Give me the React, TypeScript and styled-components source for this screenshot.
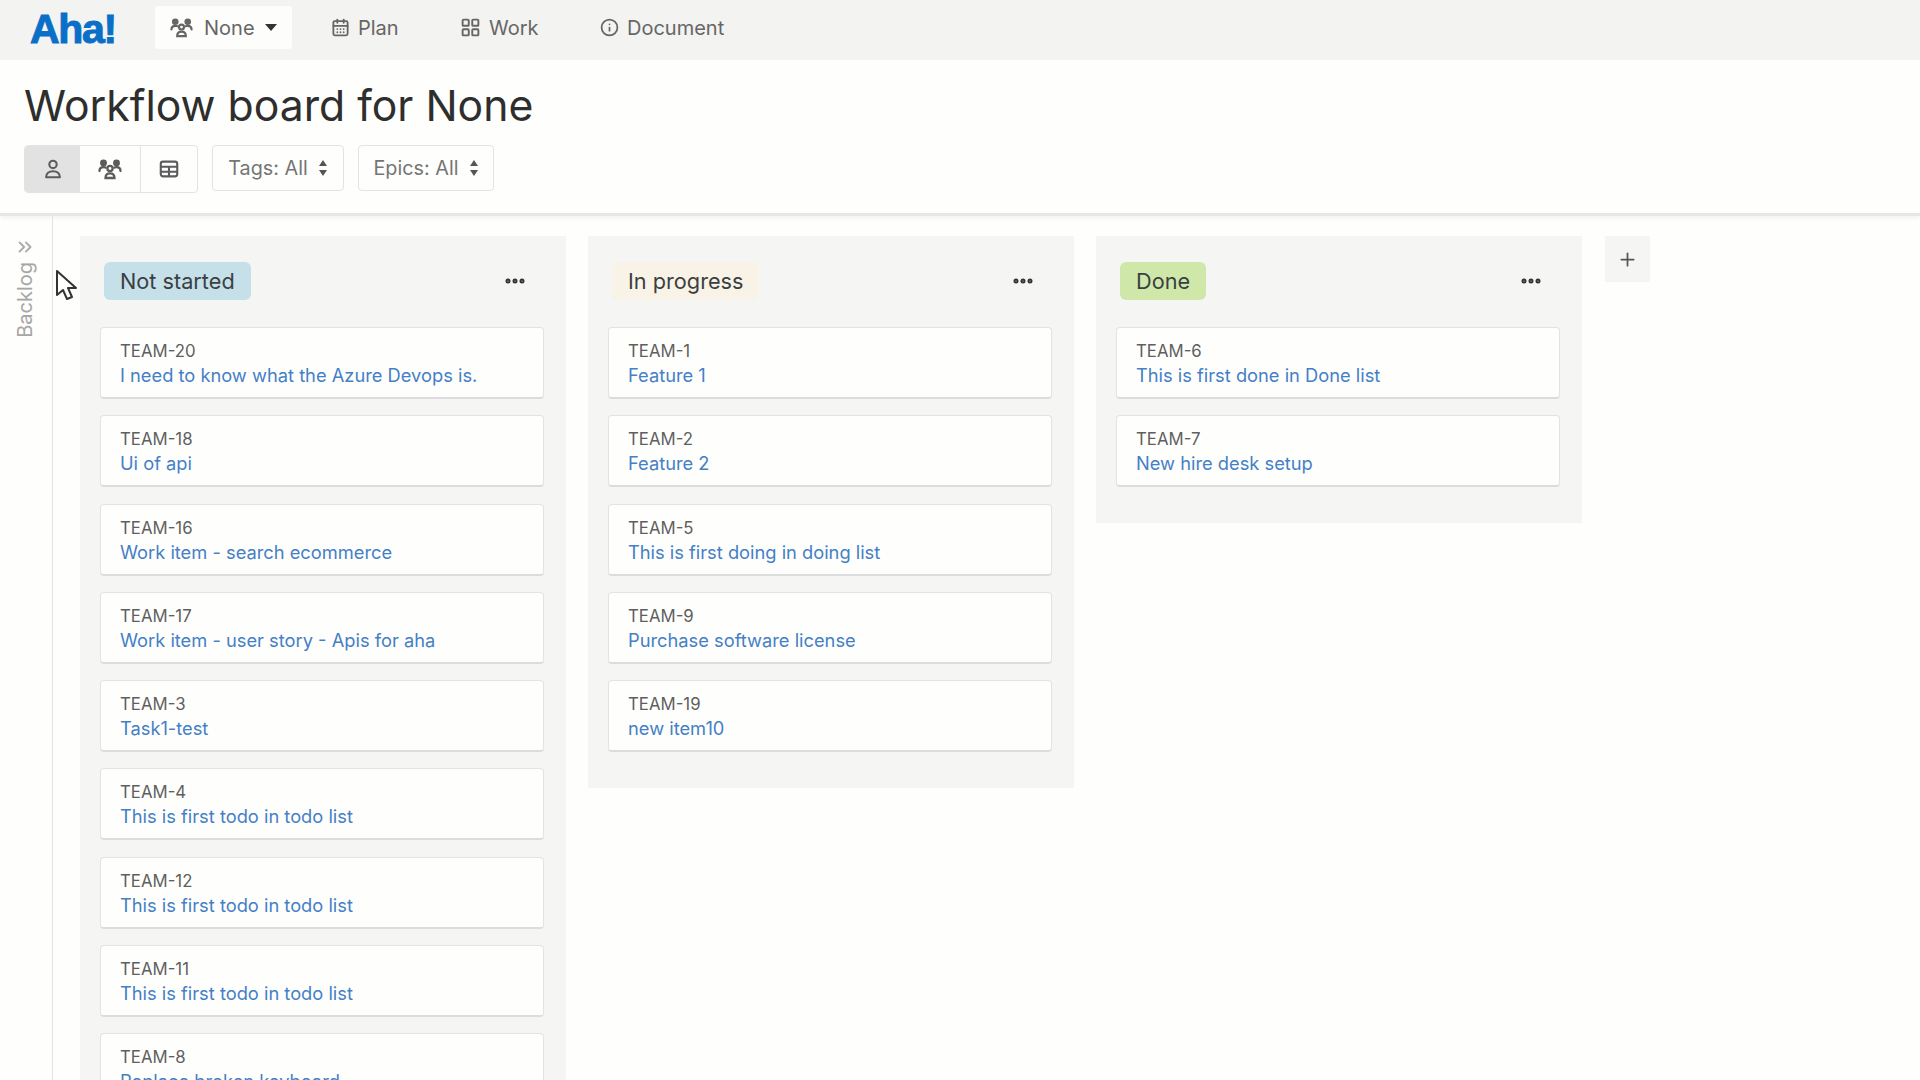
import React from "react";
import styled, { createGlobalStyle } from "styled-components";
import { CalendarDays, ChevronsRight, Ellipsis, Info, LayoutGrid, Plus } from "lucide-react";

const Global = createGlobalStyle`
  html, body { margin: 0; padding: 0; height: 100%; overflow: hidden; background: #fefefc; }
  body { font-family: Inter, "Liberation Sans", sans-serif; }
`;

const Page = styled.div`
  position: relative;
  width: 1920px;
  height: 1080px;
  overflow: hidden;
  background: #fefefc;
  display: flex;
  flex-direction: column;
`;

const Nav = styled.nav`
  height: 60px;
  flex: none;
  box-sizing: border-box;
  padding: 0 0 5px 30px;
  background: #f3f3f1;
  display: flex;
  align-items: center;
`;

const Logo = styled.div`
  width: 125px;
  margin-top: 4px;
  font-family: "Liberation Sans", sans-serif;
  font-weight: 700;
  font-size: 41px;
  letter-spacing: -1.3px;
  color: #0a6fc7;
  -webkit-text-stroke: 1px #0a6fc7;
`;

const TeamButton = styled.div`
  height: 43px;
  width: 137px;
  box-sizing: border-box;
  background: #fdfdfb;
  display: flex;
  align-items: center;
  padding-left: 15px;
  gap: 11px;
  font-size: 20px;
  color: #666;
  border-radius: 3px;
`;

const Caret = styled.span`
  width: 0;
  height: 0;
  border-left: 6px solid transparent;
  border-right: 6px solid transparent;
  border-top: 7px solid #333;
  margin-left: -1px;
`;

const NavItems = styled.div`
  display: flex;
  margin-left: 39px;
`;

const NavItem = styled.div<{ $w: number }>`
  width: ${(p) => p.$w}px;
  display: flex;
  align-items: center;
  gap: 8px;
  font-size: 20px;
  color: #666;
`;

const Header = styled.header`
  height: 156px;
  flex: none;
  box-sizing: border-box;
  padding: 20px 24px 0;
  border-bottom: 3px solid #e6e6e6;
  box-shadow: 0 2px 4px rgba(0, 0, 0, 0.05);
`;

const Title = styled.h1`
  margin: 0;
  font-size: 42.7px;
  line-height: 52px;
  font-weight: 400;
  color: #2e2e2e;
`;

const Toolbar = styled.div`
  display: flex;
  gap: 14px;
  margin-top: 13px;
`;

const ViewGroup = styled.div`
  display: flex;
  height: 46px;
  border: 1px solid #e3e3e3;
  border-radius: 4px;
  overflow: hidden;
  background: #fefefc;
`;

const ViewButton = styled.div<{ $active?: boolean; $divided?: boolean; $w: number }>`
  width: ${(p) => p.$w}px;
  display: flex;
  align-items: center;
  justify-content: center;
  color: #5c5c5c;
  background: ${(p) => (p.$active ? "#e2e2e2" : "transparent")};
  border-left: ${(p) => (p.$divided ? "1px solid #e3e3e3" : "none")};
`;

const Select = styled.div<{ $w: number }>`
  width: ${(p) => p.$w}px;
  height: 46px;
  box-sizing: border-box;
  border: 1px solid #e3e3e3;
  border-radius: 4px;
  display: flex;
  align-items: center;
  justify-content: center;
  gap: 10px;
  font-size: 19.8px;
  color: #757575;
`;

const Body = styled.main`
  flex: 1;
  display: flex;
  min-height: 0;
`;

const Sidebar = styled.aside`
  width: 53px;
  flex: none;
  box-sizing: border-box;
  border-right: 1px solid #e2e2e2;
  display: flex;
  flex-direction: column;
  align-items: center;
  padding: 20px 3px 0 0;
  color: #a9a9a9;
  gap: 4px;
`;

const BacklogLabel = styled.span`
  writing-mode: vertical-rl;
  transform: rotate(180deg);
  font-size: 20px;
  color: #a6a6a6;
`;

const Board = styled.div`
  display: flex;
  align-items: flex-start;
  gap: 22px;
  padding: 20px 0 0 27px;
`;

const Column = styled.section`
  width: 486px;
  flex: none;
  box-sizing: border-box;
  background: #f5f5f3;
  padding: 26px 22px 36px 20px;
  display: flex;
  flex-direction: column;
`;

const ColumnHead = styled.div`
  display: flex;
  align-items: center;
  justify-content: space-between;
  height: 38px;
  margin-bottom: 27px;
  padding: 0 17px 0 4px;
  color: #333;
`;

const Badge = styled.span<{ $bg: string }>`
  height: 38px;
  box-sizing: border-box;
  display: flex;
  align-items: center;
  padding: 0 16px;
  border-radius: 6px;
  background: ${(p) => p.$bg};
  font-size: 21.7px;
  color: #3a3f42;
`;

const Card = styled.article`
  height: 72px;
  flex: none;
  box-sizing: border-box;
  margin-bottom: 16.3px;
  padding: 12px 19px 0;
  background: #fefefd;
  border: 1px solid #e3e3e3;
  border-bottom: 2px solid #dcdcdc;
  border-radius: 4px;
  &:last-child { margin-bottom: 0; }
`;

const CardKey = styled.div`
  font-size: 16.8px;
  line-height: 23px;
  color: #5f5f5f;
`;

const CardName = styled.div`
  font-size: 18.3px;
  line-height: 24px;
  color: #4480c6;
  white-space: nowrap;
`;

const AddColumn = styled.div`
  width: 45px;
  height: 46px;
  flex: none;
  margin-left: 1px;
  background: #f5f5f3;
  display: flex;
  align-items: center;
  justify-content: center;
  color: #555;
`;

const Cursor = styled.svg`
  position: absolute;
  left: 55px;
  top: 269px;
`;

const TeamIcon = ({ size = 23 }: { size?: number }) => (
  <svg width={size} height={size} viewBox="0 0 24 24" fill="none" stroke="currentColor" strokeWidth="2.300" strokeLinecap="round">
    <circle cx="12" cy="11.5" r="2.6" />
    <path d="M7.500 21c0-3 2-4.600 4.500-4.600s4.500 1.600 4.500 4.600z" />
    <circle cx="5.500" cy="6" r="2.300" fill="currentColor" />
    <circle cx="18.500" cy="6" r="2.300" fill="currentColor" />
    <path d="M1.500 14c0-2.600 1.500-3.800 4-3.800 .8 0 1.500 .1 2 .4" />
    <path d="M22.500 14c0-2.600-1.500-3.800-4-3.800-.8 0-1.500 .1-2 .4" />
  </svg>
);

const UserIcon = () => (
  <svg width="22" height="22" viewBox="0 0 24 24" fill="none" stroke="currentColor" strokeWidth="2.300">
    <circle cx="12" cy="7" r="4" />
    <path d="M4.500 21c0-4 3-6.500 7.500-6.500s7.500 2.500 7.500 6.500z" strokeLinejoin="round" />
  </svg>
);

const TableIcon = () => (
  <svg width="22" height="22" viewBox="0 0 24 24" fill="none" stroke="currentColor" strokeWidth="2.300">
    <rect x="3" y="4" width="18" height="16" rx="2.500" />
    <path d="M3 9.500h18M3 15h18M12 9.500V20" />
  </svg>
);

const UpDown = () => (
  <svg width="10" height="18" viewBox="0 0 10 18" fill="#555">
    <path d="M5 1l4 6H1zM5 17l-4-6h8z" />
  </svg>
);

const columns = [
  {
    name: "Not started",
    color: "#c6e0ea",
    cards: [
      ["TEAM-20", "I need to know what the Azure Devops is."],
      ["TEAM-18", "Ui of api"],
      ["TEAM-16", "Work item - search ecommerce"],
      ["TEAM-17", "Work item - user story - Apis for aha"],
      ["TEAM-3", "Task1-test"],
      ["TEAM-4", "This is first todo in todo list"],
      ["TEAM-12", "This is first todo in todo list"],
      ["TEAM-11", "This is first todo in todo list"],
      ["TEAM-8", "Replace broken keyboard"],
    ],
  },
  {
    name: "In progress",
    color: "#f8f3e6",
    cards: [
      ["TEAM-1", "Feature 1"],
      ["TEAM-2", "Feature 2"],
      ["TEAM-5", "This is first doing in doing list"],
      ["TEAM-9", "Purchase software license"],
      ["TEAM-19", "new item10"],
    ],
  },
  {
    name: "Done",
    color: "#cfe8a9",
    cards: [
      ["TEAM-6", "This is first done in Done list"],
      ["TEAM-7", "New hire desk setup"],
    ],
  },
];

export default function App() {
  return (
    <Page>
      <Global />
      <Nav>
        <Logo>Aha!</Logo>
        <TeamButton>
          <TeamIcon />
          None
          <Caret />
        </TeamButton>
        <NavItems>
          <NavItem $w={129}>
            <CalendarDays size={19} strokeWidth={2.300} />
            Plan
          </NavItem>
          <NavItem $w={140}>
            <LayoutGrid size={21} strokeWidth={2.200} />
            Work
          </NavItem>
          <NavItem $w={140}>
            <Info size={19} strokeWidth={2.200} />
            Document
          </NavItem>
        </NavItems>
      </Nav>
      <Header>
        <Title>Workflow board for None</Title>
        <Toolbar>
          <ViewGroup>
            <ViewButton $active $w={55}>
              <UserIcon />
            </ViewButton>
            <ViewButton $w={60}>
              <TeamIcon size={24} />
            </ViewButton>
            <ViewButton $divided $w={56}>
              <TableIcon />
            </ViewButton>
          </ViewGroup>
          <Select $w={132}>
            Tags: All
            <UpDown />
          </Select>
          <Select $w={136}>
            Epics: All
            <UpDown />
          </Select>
        </Toolbar>
      </Header>
      <Body>
        <Sidebar>
          <ChevronsRight size={22} strokeWidth={2} />
          <BacklogLabel>Backlog</BacklogLabel>
        </Sidebar>
        <Board>
          {columns.map((column) => (
            <Column key={column.name}>
              <ColumnHead>
                <Badge $bg={column.color}>{column.name}</Badge>
                <Ellipsis size={24} strokeWidth={3} />
              </ColumnHead>
              {column.cards.map(([key, name]) => (
                <Card key={key}>
                  <CardKey>{key}</CardKey>
                  <CardName>{name}</CardName>
                </Card>
              ))}
            </Column>
          ))}
          <AddColumn>
            <Plus size={21} strokeWidth={2} />
          </AddColumn>
        </Board>
      </Body>
      <Cursor width="24" height="32" viewBox="0 0 24 32" fill="#fff" stroke="#333" strokeWidth="2" strokeLinejoin="round">
        <path d="M2 2v24l6-5 4 9 5-2-4-9h8z" />
      </Cursor>
    </Page>
  );
}
